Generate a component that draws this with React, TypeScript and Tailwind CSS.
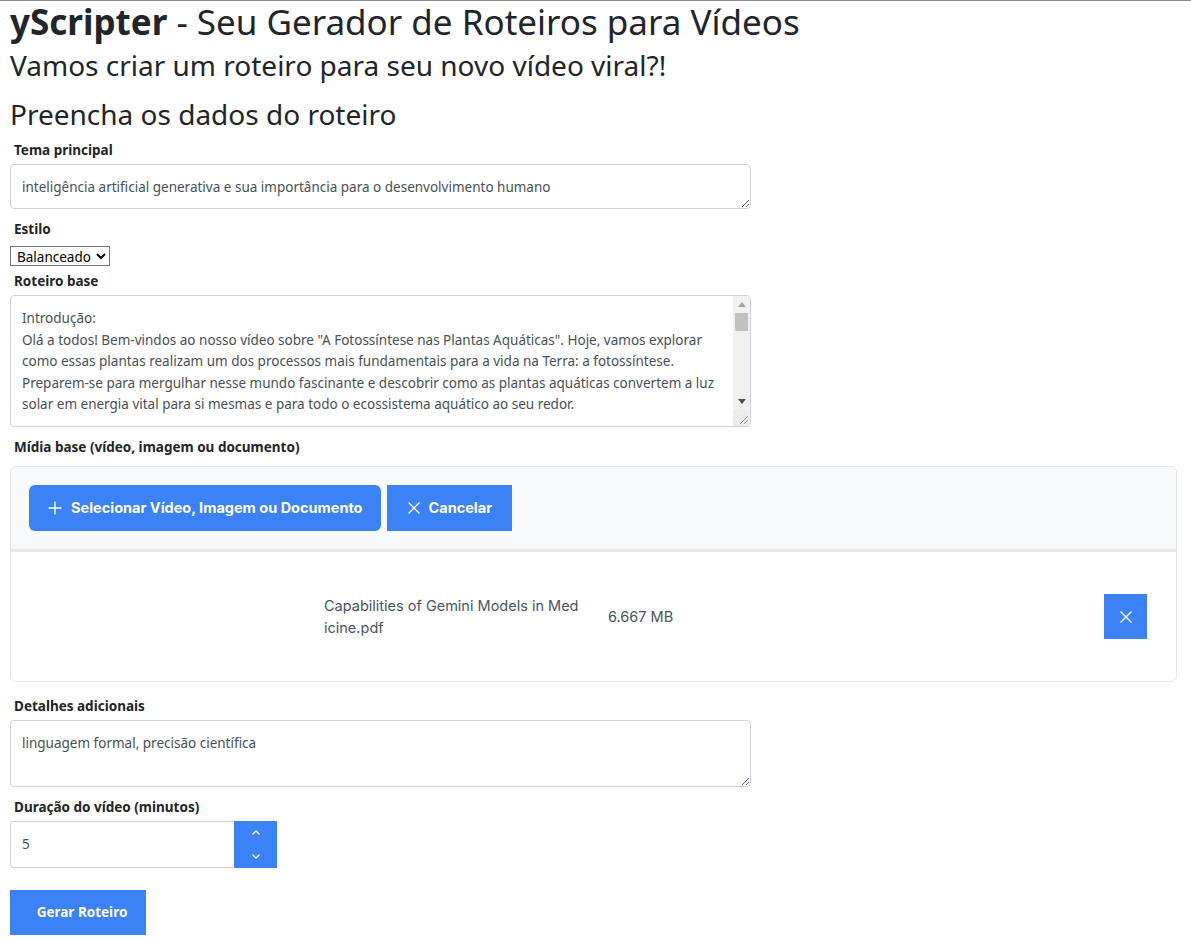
import React from "react";

const Label = ({ children, className = "" }: { children: React.ReactNode; className?: string }) => (
  <div className={`pl-[4px] text-[13.5px] font-bold leading-[20px] text-[#212529] ${className}`}>{children}</div>
);

export default function App() {
  const roteiro =
    'Introdução:\nOlá a todos! Bem-vindos ao nosso vídeo sobre "A Fotossíntese nas Plantas Aquáticas". Hoje, vamos explorar como essas plantas realizam um dos processos mais fundamentais para a vida na Terra: a fotossíntese. Preparem-se para mergulhar nesse mundo fascinante e descobrir como as plantas aquáticas convertem a luz solar em energia vital para si mesmas e para todo o ecossistema aquático ao seu redor.\n\nDesenvolvimento:';
  return (
    <div className="min-h-[940px] border-t border-[#8c8c8c] bg-white font-['Noto_Sans',sans-serif] text-[#212529]">
      <div className="px-[10px]">
        <h1 className="text-[35px] leading-[42px] text-[#212529]">
          <span className="font-bold">yScripter</span> - Seu Gerador de Roteiros para Vídeos
        </h1>
        <h2 className="mt-[5px] text-[28px] leading-[34px]">Vamos criar um roteiro para seu novo vídeo viral?!</h2>
        <h2 className="mt-[15px] text-[28px] leading-[34px]">Preencha os dados do roteiro</h2>

        <Label className="mt-[9px]">Tema principal</Label>
        <textarea
          readOnly
          className="mt-[4px] block h-[45px] w-[741px] resize-y rounded-[4px] border border-[#ced4da] px-[11px] py-[12px] text-[13.5px] leading-[20px] text-[#495057] outline-none"
          defaultValue="inteligência artificial generativa e sua importância para o desenvolvimento humano"
        />

        <Label className="mt-[10px]">Estilo</Label>
        <select className="mt-[7px] block h-[20px] border border-[#767676] bg-white px-[2px] text-[13.5px] text-black outline-none">
          <option>Balanceado</option>
        </select>

        <Label className="mt-[5px]">Roteiro base</Label>
        <div className="relative mt-[4px] h-[132px] w-[741px]">
          <textarea
            readOnly
            className="block h-[132px] w-[741px] resize-none overflow-hidden rounded-[4px] border border-[#ced4da] py-[12px] pl-[11px] pr-[30px] text-[13.5px] leading-[21.5px] text-[#495057] outline-none"
            defaultValue={roteiro}
          />
          <div className="absolute top-[1px] right-[1px] bottom-[1px] flex w-[17px] flex-col rounded-tr-[3px] bg-[#f1f1f1]">
            <div className="flex h-[17px] items-center justify-center">
              <svg width="8" height="5" viewBox="0 0 8 5">
                <path d="M0 5L4 0l4 5z" fill="#a3a3a3" />
              </svg>
            </div>
            <div className="mx-[2px] h-[18px] bg-[#c1c1c1]" />
            <div className="flex-1" />
            <div className="flex h-[17px] items-center justify-center">
              <svg width="8" height="5" viewBox="0 0 8 5">
                <path d="M0 0L4 5l4-5z" fill="#505050" />
              </svg>
            </div>
            <div className="flex h-[16px] items-end justify-end bg-[#ececec] pr-[2px] pb-[2px]">
              <svg width="8" height="8" viewBox="0 0 8 8" stroke="#9a9a9a" strokeWidth="1">
                <path d="M0 8L8 0M4 8L8 4" />
              </svg>
            </div>
          </div>
        </div>

        <Label className="mt-[10px]">Mídia base (vídeo, imagem ou documento)</Label>
        <div className="mt-[9px] w-[1167px] rounded-[6px] border border-[#e5e7eb] font-['Inter',sans-serif]">
          <div className="flex gap-[6px] rounded-t-[6px] border-b-[3px] border-[#e5e7eb] bg-[#f8f9fa] px-[18px] pt-[18px] pb-[18px]">
            <button className="flex h-[46px] items-center gap-[8px] rounded-[6px] bg-[#3b82f6] px-[18px] text-[14.5px] font-bold text-white">
              <svg width="16" height="16" viewBox="0 0 16 16" fill="none" stroke="white" strokeWidth="1.4">
                <path d="M8 1.5v13M1.5 8h13" />
              </svg>
              Selecionar Vídeo, Imagem ou Documento
            </button>
            <button className="flex h-[46px] items-center gap-[8px] bg-[#3b82f6] px-[20px] text-[14.5px] font-bold text-white">
              <svg width="14" height="14" viewBox="0 0 14 14" fill="none" stroke="white" strokeWidth="1.4">
                <path d="M1.5 1.5l11 11M12.5 1.5l-11 11" />
              </svg>
              Cancelar
            </button>
          </div>
          <div className="flex h-[129px] items-center pl-[313px] pr-[29px]">
            <div className="w-[262px] whitespace-nowrap text-[14.5px] leading-[22px] text-[#4b5563]">
              Capabilities of Gemini Models in Med
              <br />
              icine.pdf
            </div>
            <div className="ml-[22px] text-[14.5px] text-[#4b5563]">6.667 MB</div>
            <div className="flex-1" />
            <button className="flex h-[45px] w-[43px] items-center justify-center bg-[#3b82f6]">
              <svg width="14" height="14" viewBox="0 0 14 14" fill="none" stroke="white" strokeWidth="1.4">
                <path d="M1.5 1.5l11 11M12.5 1.5l-11 11" />
              </svg>
            </button>
          </div>
        </div>

        <Label className="mt-[14px]">Detalhes adicionais</Label>
        <textarea
          readOnly
          className="mt-[4px] block h-[67px] w-[741px] resize-y rounded-[4px] border border-[#ced4da] px-[11px] py-[12px] text-[13.5px] leading-[20px] text-[#495057] outline-none"
          defaultValue="linguagem formal, precisão científica"
        />

        <Label className="mt-[10px]">Duração do vídeo (minutos)</Label>
        <div className="mt-[4px] flex h-[47px]">
          <div className="flex w-[224px] items-center rounded-l-[4px] border border-r-0 border-[#ced4da] px-[11px] text-[13.5px] text-[#495057]">
            5
          </div>
          <div className="flex w-[43px] flex-col bg-[#3b82f6]">
            <div className="flex flex-1 items-center justify-center">
              <svg width="10" height="7" viewBox="0 0 10 7" fill="none" stroke="white" strokeWidth="1.3">
                <path d="M1.5 5.5L5 2l3.5 3.5" />
              </svg>
            </div>
            <div className="flex flex-1 items-center justify-center">
              <svg width="10" height="7" viewBox="0 0 10 7" fill="none" stroke="white" strokeWidth="1.3">
                <path d="M1.5 1.5L5 5l3.5-3.5" />
              </svg>
            </div>
          </div>
        </div>

        <button className="mt-[22px] h-[45px] w-[136px] bg-[#3b82f6] pl-[8px] text-[13.5px] font-bold text-white">Gerar Roteiro</button>
      </div>
    </div>
  );
}
